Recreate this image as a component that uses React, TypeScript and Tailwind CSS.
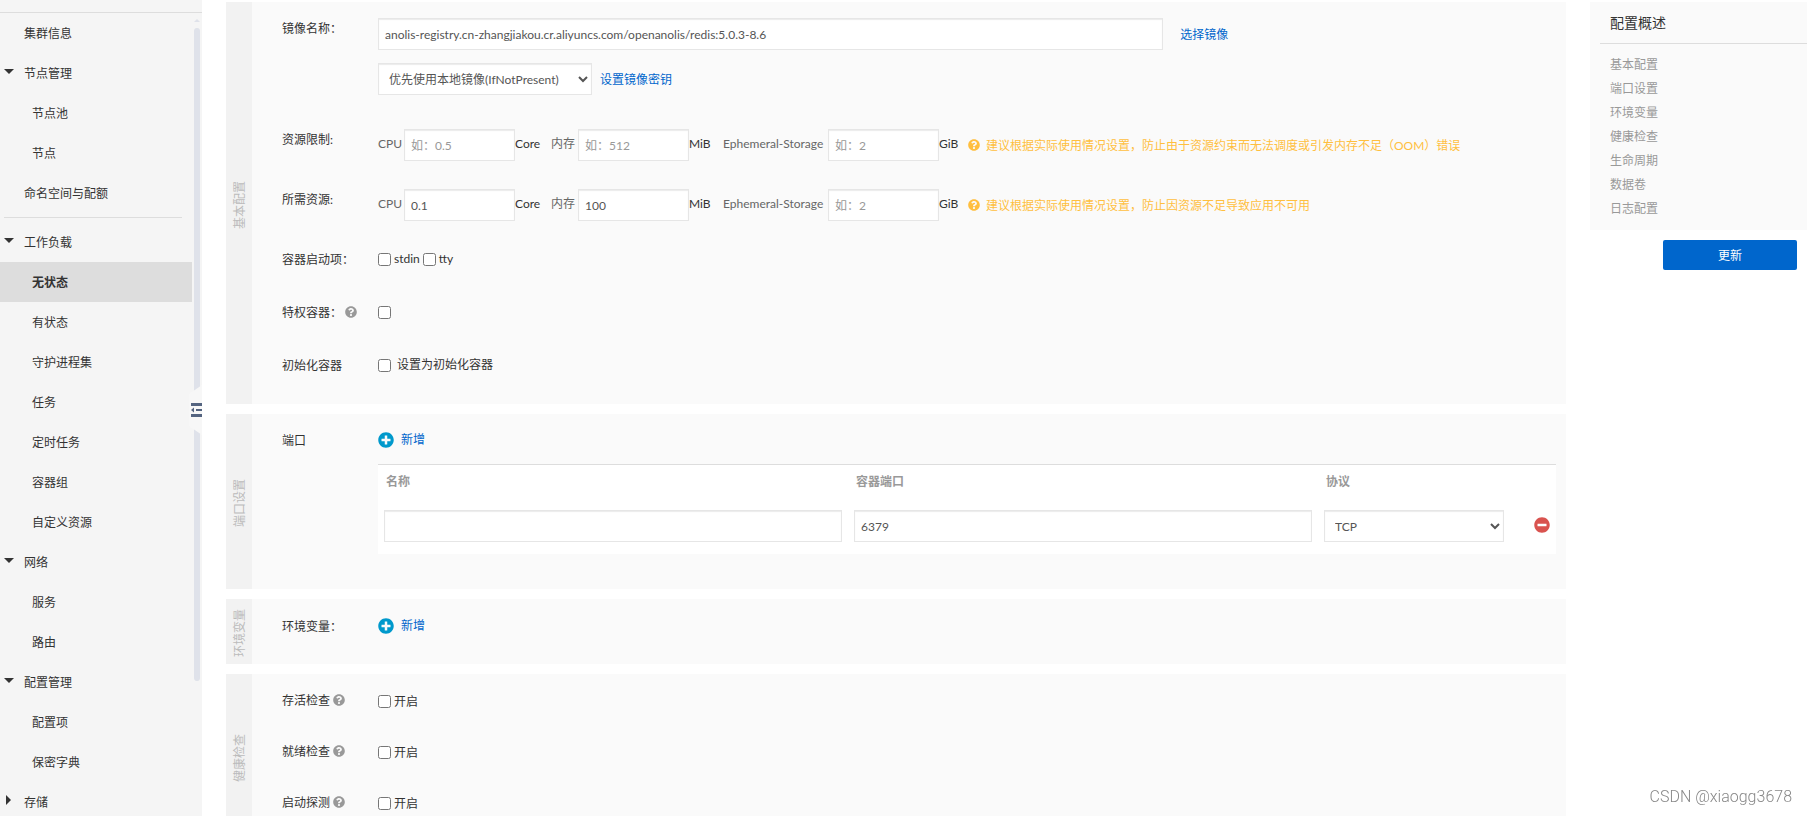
import { useId, type ReactNode } from 'react';
import clsx from 'clsx';
import { FaMinusCircle, FaPlusCircle, FaQuestionCircle } from 'react-icons/fa';

type NavItem = {
    label: string;
    level: 1 | 2;
    arrow?: 'down' | 'right';
    active?: boolean;
};

const clusterNav: NavItem[] = [
    { label: '集群信息', level: 1 },
    { label: '节点管理', level: 1, arrow: 'down' },
    { label: '节点池', level: 2 },
    { label: '节点', level: 2 },
    { label: '命名空间与配额', level: 1 },
];

const workloadNav: NavItem[] = [
    { label: '工作负载', level: 1, arrow: 'down' },
    { label: '无状态', level: 2, active: true },
    { label: '有状态', level: 2 },
    { label: '守护进程集', level: 2 },
    { label: '任务', level: 2 },
    { label: '定时任务', level: 2 },
    { label: '容器组', level: 2 },
    { label: '自定义资源', level: 2 },
    { label: '网络', level: 1, arrow: 'down' },
    { label: '服务', level: 2 },
    { label: '路由', level: 2 },
    { label: '配置管理', level: 1, arrow: 'down' },
    { label: '配置项', level: 2 },
    { label: '保密字典', level: 2 },
    { label: '存储', level: 1, arrow: 'right' },
];

const outline = ['基本配置', '端口设置', '环境变量', '健康检查', '生命周期', '数据卷', '日志配置'];

const fieldClass =
    'h-8 border border-[#e6e6e6] bg-white text-[#555] shadow-[inset_0_1px_1px_rgba(0,0,0,0.08)] outline-none placeholder:text-[#999]';

function NavList({ items }: { items: NavItem[] }) {
    return (
        <ul>
            {items.map((item) => (
                <li key={item.label}>
                    <a
                        href="#"
                        className={clsx(
                            'flex h-10 w-48 items-center pt-0.5 text-[#333]',
                            item.level === 1 ? 'pl-1' : 'pl-8',
                            item.active && 'bg-[#ddd] font-bold'
                        )}
                    >
                        {item.level === 1 && (
                            <span className="w-5 pb-1.5">
                                {item.arrow === 'down' && (
                                    <svg width="10" height="5" viewBox="0 0 10 5" className="fill-[#333]">
                                        <path d="M0 0h10L5 5z" />
                                    </svg>
                                )}
                                {item.arrow === 'right' && (
                                    <svg width="10" height="10" viewBox="0 0 10 10" className="fill-[#333]">
                                        <path d="M2 0v10l5-5z" />
                                    </svg>
                                )}
                            </span>
                        )}
                        {item.label}
                    </a>
                </li>
            ))}
        </ul>
    );
}

function Sidebar() {
    return (
        <aside className="relative h-full w-[202px] shrink-0 overflow-hidden bg-[#f5f5f5]">
            <nav className="mt-3 border-t border-[#ddd]">
                <NavList items={clusterNav} />
                <hr className="my-1 mr-5 ml-1 border-[#ddd]" />
                <NavList items={workloadNav} />
            </nav>

            {/* scrollbar */}
            <div className="absolute top-[19px] right-0.5 flex w-1.5 flex-col items-center gap-1.5">
                <svg width="6" height="3" viewBox="0 0 6 3" className="fill-[#dfe2ea]">
                    <path d="M3 0l3 3H0z" />
                </svg>
                <div className="h-[653px] w-1.5 rounded-full bg-[#dfe2ea]" />
            </div>

            {/* collapse handle */}
            <button type="button" aria-label="收起菜单" className="absolute top-[385px] right-0">
                <svg width="13" height="50" viewBox="0 0 13 50">
                    <path d="M13 0v50L0 41V9z" fill="#f7f7f7" />
                    <path d="M2 18h11v3H2zM2 29h11v3H2zM7 24h6v2H7z" fill="#546480" />
                    <path d="M2 25l3-2.500v5z" fill="#546480" />
                </svg>
            </button>
        </aside>
    );
}

function Section({ title, className, children }: { title: string; className?: string; children: ReactNode }) {
    return (
        <section className="flex bg-[#fafafa]">
            <div className="flex w-[26px] shrink-0 items-center justify-center bg-[#f2f2f2] pt-1 pl-0.5">
                <h2 className="rotate-180 whitespace-nowrap text-[#bbb] [text-orientation:sideways] [writing-mode:vertical-rl]">
                    {title}
                </h2>
            </div>
            <div className={clsx('flex min-w-0 flex-1 flex-col pr-2.5 pl-[30px]', className)}>{children}</div>
        </section>
    );
}

type RowProps = {
    label: string;
    htmlFor?: string;
    help?: boolean;
    className?: string;
    children: ReactNode;
};

function Row({ label, htmlFor, help, className, children }: RowProps) {
    return (
        <div className={clsx('flex', className)}>
            <div className="flex h-5 w-24 shrink-0 items-center gap-[3px]">
                <label htmlFor={htmlFor} className="pt-0.5">{label}</label>
                {help && <FaQuestionCircle className="size-3 text-[#999]" />}
            </div>
            <div className="min-w-0 flex-1">{children}</div>
        </div>
    );
}

function Check({ id, label, className }: { id?: string; label?: string; className?: string }) {
    return (
        <label className={clsx('flex items-center', className)}>
            <input id={id} type="checkbox" className="size-[13px]" />
            {label}
        </label>
    );
}

type ResourceProps = { label: string; hint: string; cpu?: string; memory?: string };

function ResourceRow({ label, hint, cpu, memory }: ResourceProps) {
    const id = useId();
    const quantities = [
        { name: 'CPU', unit: 'Core', placeholder: '如：0.5', value: cpu, nameClass: 'w-[26px]', unitClass: 'w-9' },
        { name: '内存', unit: 'MiB', placeholder: '如：512', value: memory, nameClass: 'w-[27px]', unitClass: 'w-[34px]' },
        { name: 'Ephemeral-Storage', unit: 'GiB', placeholder: '如：2', nameClass: 'w-[105px]', unitClass: 'w-[29px]' },
    ];

    return (
        <Row label={label} htmlFor={`${id}-CPU`}>
            <div className="flex items-center whitespace-nowrap">
                {quantities.map((q) => (
                    <div key={q.name} className="flex items-center">
                        <label htmlFor={`${id}-${q.name}`} className={clsx('pb-0.5 text-[#666]', q.nameClass)}>
                            {q.name}
                        </label>
                        <input
                            id={`${id}-${q.name}`}
                            type="text"
                            defaultValue={q.value}
                            placeholder={q.placeholder}
                            className={clsx(fieldClass, 'w-[111px] px-1.5')}
                        />
                        <span className={clsx('pb-0.5', q.unitClass)}>{q.unit}</span>
                    </div>
                ))}
                <p className="flex items-center gap-1.5 text-[#ffbf3f]">
                    <FaQuestionCircle className="size-3" />
                    <span className="pt-0.5">{hint}</span>
                </p>
            </div>
        </Row>
    );
}

function AddLink() {
    return (
        <a href="#" className="flex h-5 items-center gap-[7px] text-[#06c]">
            <FaPlusCircle className="size-4 text-[#09c]" />
            新增
        </a>
    );
}

function PortTable() {
    return (
        <table className="mt-3.5 w-full table-fixed border-t border-[#ddd] bg-white">
            <colgroup>
                <col />
                <col />
                <col className="w-48" />
                <col className="w-[46px]" />
            </colgroup>
            <thead>
                <tr className="h-[34px] text-left text-[#999]">
                    <th className="px-2">名称</th>
                    <th className="px-2">容器端口</th>
                    <th className="px-2">协议</th>
                    <th />
                </tr>
            </thead>
            <tbody>
                <tr className="h-[55px]">
                    <td className="px-1.5">
                        <input type="text" aria-label="名称" className={clsx(fieldClass, 'block w-full px-1.5')} />
                    </td>
                    <td className="px-1.5">
                        <input
                            type="text"
                            aria-label="容器端口"
                            defaultValue="6379"
                            className={clsx(fieldClass, 'block w-full px-1.5')}
                        />
                    </td>
                    <td className="px-1.5">
                        <select aria-label="协议" className={clsx(fieldClass, 'block w-full pl-1.5')}>
                            <option>TCP</option>
                            <option>UDP</option>
                        </select>
                    </td>
                    <td className="px-1.5 pb-0.5">
                        <button type="button" aria-label="删除" className="ml-auto block">
                            <FaMinusCircle className="size-4 text-[#d9534f]" />
                        </button>
                    </td>
                </tr>
            </tbody>
        </table>
    );
}

function Overview() {
    return (
        <aside className="w-[217px] shrink-0 pt-0.5">
            <div className="bg-[#fafafa] pb-[9px] pl-2.5">
                <h2 className="flex h-[42px] items-center border-b border-[#ddd] pl-2.5 text-sm">配置概述</h2>
                <ul className="pt-[9px] pl-2.5 leading-6 text-[#999]">
                    {outline.map((name) => (
                        <li key={name}>
                            <a href="#">{name}</a>
                        </li>
                    ))}
                </ul>
            </div>
            <div className="flex justify-end pt-2.5 pr-2.5">
                <button type="button" className="h-[30px] w-[134px] rounded-xs bg-[#06c] pt-0.5 text-white">
                    更新
                </button>
            </div>
        </aside>
    );
}

export default function App() {
    return (
        <div className="flex h-screen overflow-hidden bg-white font-[Lato,'Noto_Sans_CJK_SC',sans-serif] text-xs text-[#333]">
            <Sidebar />

            <main className="flex min-w-0 flex-1 flex-col gap-2.5 px-6 pt-0.5">
                <Section title="基本配置" className="gap-7 pt-4 pb-6">
                    <Row label="镜像名称：" htmlFor="image" className="pb-1.5">
                        <div className="flex items-center gap-[17px]">
                            <input
                                id="image"
                                type="text"
                                defaultValue="anolis-registry.cn-zhangjiakou.cr.aliyuncs.com/openanolis/redis:5.0.3-8.6"
                                className={clsx(fieldClass, 'w-2/3 px-1.5')}
                            />
                            <a href="#" className="pt-0.5 text-[#06c]">选择镜像</a>
                        </div>
                        <div className="mt-[13px] flex items-center gap-2">
                            <select aria-label="镜像拉取策略" className={clsx(fieldClass, 'w-[214px] pl-1.5')}>
                                <option>优先使用本地镜像(IfNotPresent)</option>
                                <option>总是拉取镜像(Always)</option>
                            </select>
                            <a href="#" className="pt-0.5 text-[#06c]">设置镜像密钥</a>
                        </div>
                    </Row>

                    <ResourceRow
                        label="资源限制:"
                        hint="建议根据实际使用情况设置，防止由于资源约束而无法调度或引发内存不足（OOM）错误"
                    />
                    <ResourceRow
                        label="所需资源:"
                        cpu="0.1"
                        memory="100"
                        hint="建议根据实际使用情况设置，防止因资源不足导致应用不可用"
                    />

                    <Row label="容器启动项：" htmlFor="stdin" className="h-[25px]">
                        <div className="flex h-5 items-center gap-[3px]">
                            <Check id="stdin" label="stdin" className="gap-[3px]" />
                            <Check label="tty" className="gap-[3px]" />
                        </div>
                    </Row>
                    <Row label="特权容器：" htmlFor="privileged" help className="h-[25px]">
                        <Check id="privileged" className="h-5" />
                    </Row>
                    <Row label="初始化容器" htmlFor="init" className="h-[25px]">
                        <Check id="init" label="设置为初始化容器" className="h-5 gap-1.5" />
                    </Row>
                </Section>

                <Section title="端口设置" className="pt-4 pb-[35px]">
                    <Row label="端口">
                        <AddLink />
                        <PortTable />
                    </Row>
                </Section>

                <Section title="环境变量" className="pt-[17px] pb-7">
                    <Row label="环境变量：">
                        <AddLink />
                    </Row>
                </Section>

                <Section title="健康检查" className="gap-[31px] pt-4 pb-7">
                    {['存活检查', '就绪检查', '启动探测'].map((name) => (
                        <Row key={name} label={name} htmlFor={name} help className="h-5">
                            <Check id={name} label="开启" className="h-6 gap-[3px]" />
                        </Row>
                    ))}
                </Section>
            </main>

            <Overview />

            <div className="fixed right-[15px] bottom-[7px] font-[Roboto,sans-serif] text-base font-light text-[#888]">
                CSDN @xiaogg3678
            </div>
        </div>
    );
}
